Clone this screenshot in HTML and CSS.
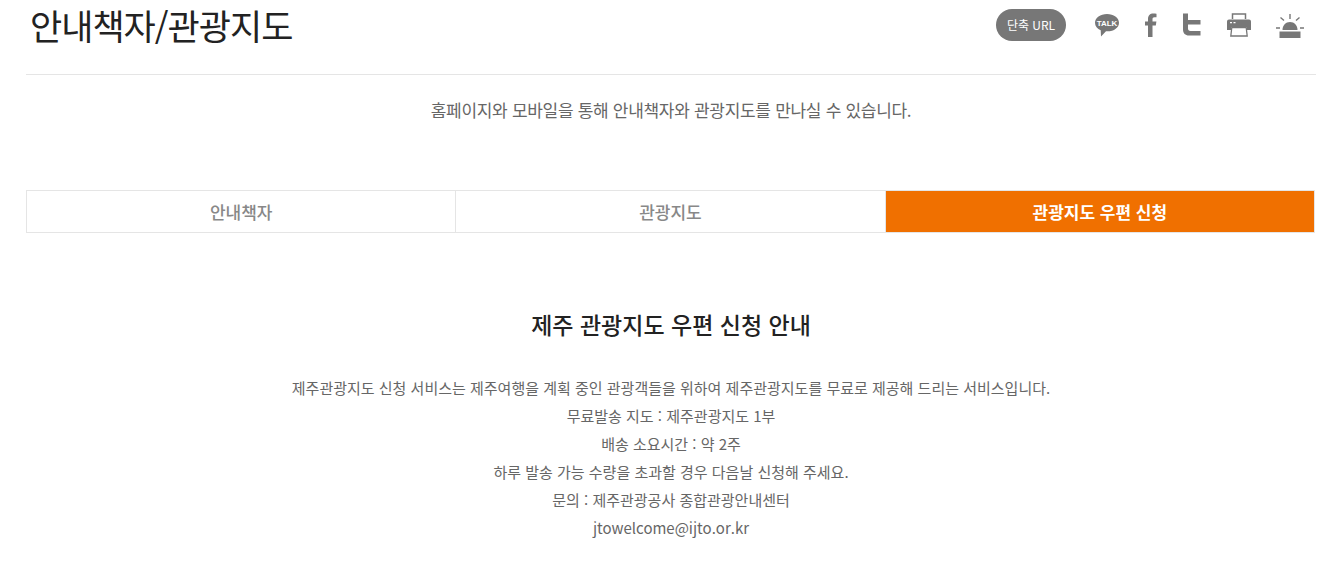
FILE: index.html
```html
<!DOCTYPE html>
<html lang="ko">

<head>
  <meta charset="UTF-8">
  <title>안내책자/관광지도</title>
  <link rel="stylesheet" href="styles.css">
</head>

<body>
  <div class="page">
    <div class="top">
      <h1>안내책자/관광지도</h1>
      <div class="share">
        <a class="short-url">단축 URL</a>
        <svg class="icon" width="26" height="26" viewBox="0 0 26 26">
          <path d="M13 2C6.4 2 1 5.6 1 10.800c0 3.400 2.300 6 5.700 7.400L7 24.500l5-5.200C19.600 19.800 25 16 25 10.800 25 5.600 19.600 2 13 2z" fill="#777" />
          <text x="13" y="13.500" class="talk" text-anchor="middle">TALK</text>
        </svg>
        <svg class="icon" width="14" height="26" viewBox="0 0 14 26">
          <path d="M4 25V13.500H1V9.500h3V7C4 3.500 6 1.500 9.300 1.500c1.500 0 2.700.1 3.200.2v3.600h-2c-1.600 0-2 .8-2 2v2.200h3.900l-.6 4H8.500V25z" fill="#777" />
        </svg>
        <svg class="icon" width="20" height="26" viewBox="0 0 20 26">
          <path d="M1 1.500h5v6.500h12.500v4.500H6v4c0 1.600.8 2.500 2.500 2.500h10v4.500H7c-3.800 0-6-2.200-6-6z" fill="#777" />
        </svg>
        <svg class="icon" width="26" height="26" viewBox="0 0 26 26">
          <path d="M6.500 7V2h13v5" fill="none" stroke="#777" stroke-width="1.500" />
          <path d="M3 7.500h20a2 2 0 0 1 2 2V18h-4v-3H5v3H1V9.500a2 2 0 0 1 2-2z" fill="#777" />
          <path d="M5.800 15.500h14.400l1 8.500H4.800z" fill="none" stroke="#777" stroke-width="1.300" />
          <path d="M4 10h2v1.300H4zM7.500 10h2v1.300h-2z" fill="#fff" />
        </svg>
        <svg class="icon" width="28" height="26" viewBox="0 0 28 26">
          <path d="M6.500 18c0-4.500 3.200-8 7.500-8s7.500 3.500 7.500 8z" fill="#777" />
          <path d="M3.500 19.500h21V26h-21z" fill="#777" />
          <path d="M14 2v5M4.500 5.500l3.500 3M23.500 5.500l-3.500 3M0 16h4M24 16h4" stroke="#777" stroke-width="1.400" fill="none" />
        </svg>
      </div>
    </div>

    <p class="lead">홈페이지와 모바일을 통해 안내책자와 관광지도를 만나실 수 있습니다.</p>

    <div class="tabs">
      <a class="tab">안내책자</a>
      <a class="tab">관광지도</a>
      <a class="tab on">관광지도 우편 신청</a>
    </div>

    <h2>제주 관광지도 우편 신청 안내</h2>
    <div class="info">
      <p>제주관광지도 신청 서비스는 제주여행을 계획 중인 관광객들을 위하여 제주관광지도를 무료로 제공해 드리는 서비스입니다.</p>
      <p>무료발송 지도 : 제주관광지도 1부</p>
      <p>배송 소요시간 : 약 2주</p>
      <p>하루 발송 가능 수량을 초과할 경우 다음날 신청해 주세요.</p>
      <p>문의 : 제주관광공사 종합관광안내센터</p>
      <p>jtowelcome@ijto.or.kr</p>
    </div>
  </div>
</body>

</html>
```

FILE: styles.css
```css
html,
body {
  height: 573px;
  overflow: hidden;
}

body {
  margin: 0;
  background: #fff;
  color: #666;
  font-family: "Noto Sans CJK KR", "Noto Sans", sans-serif;
}

.page {
  width: 1290px;
  margin-left: 26px;
}

.top {
  display: flex;
  justify-content: space-between;
  align-items: flex-start;
  height: 74px;
  border-bottom: 1px solid #e5e5e5;
}

h1 {
  margin: 0 0 0 4px;
  color: #222;
  font-size: 35px;
  font-weight: 400;
  line-height: 50px;
  letter-spacing: -1px;
}

.share {
  display: flex;
  align-items: center;
  margin: 9px 12px 0 0;
}

.short-url {
  width: 70px;
  height: 32px;
  margin-right: 28px;
  border-radius: 16px;
  background: #777;
  color: #fff;
  font-size: 12px;
  line-height: 32px;
  text-align: center;
}

.icon {
  margin-right: 24px;
}

.icon:last-child {
  margin-right: 0;
}

.talk {
  fill: #fff;
  font-family: "Liberation Sans", sans-serif;
  font-size: 8px;
  font-weight: bold;
}

.lead {
  margin: 22px 0 0;
  font-size: 17px;
  line-height: 25px;
  text-align: center;
  letter-spacing: -0.3px;
}

.tabs {
  display: flex;
  width: 1289px;
  height: 43px;
  margin-top: 68px;
  border: 1px solid #e5e5e5;
  box-sizing: border-box;
}

.tab {
  flex: 1;
  border-right: 1px solid #e5e5e5;
  color: #888;
  font-size: 17px;
  font-weight: 500;
  line-height: 41px;
  text-align: center;
}

.tab:last-child {
  border-right: none;
}

.tab.on {
  background: #f07000;
  color: #fff;
  font-weight: 700;
}

h2 {
  margin: 73px 0 0;
  color: #222;
  font-size: 23px;
  font-weight: 500;
  line-height: 36px;
  text-align: center;
}

.info {
  margin-top: 32px;
  font-size: 15px;
  line-height: 28px;
  text-align: center;
}

.info p {
  margin: 0;
}
```
